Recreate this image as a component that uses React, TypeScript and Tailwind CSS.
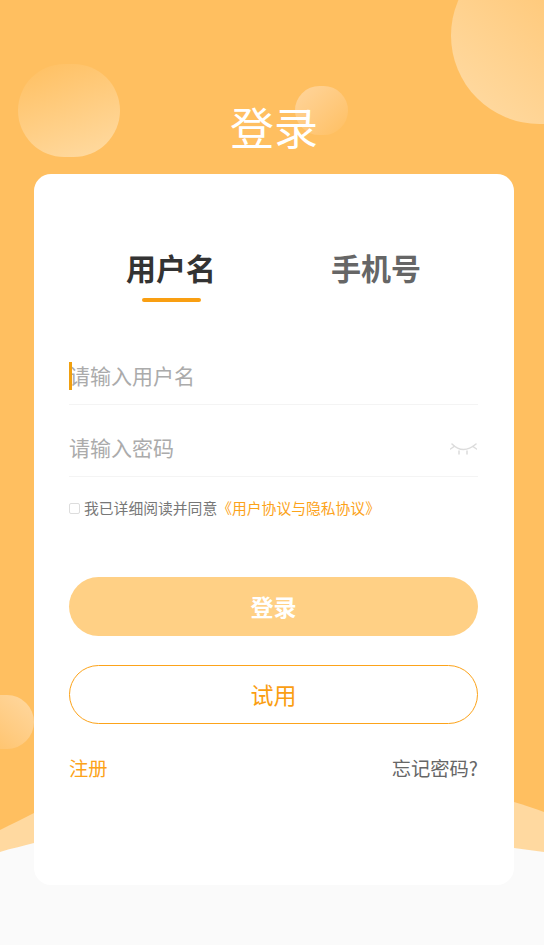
export default function App() {
  const font = { fontFamily: '"Noto Sans CJK SC", sans-serif' };
  return (
    <div style={font} className="relative w-[544px] h-[945px] overflow-hidden bg-[#ffbf60]">
      {/* decorative background */}
      <div className="absolute left-[451px] top-[-53px] w-[177px] h-[177px] rounded-full bg-gradient-to-bl from-[#ffbf60] to-[#ffdca6]" />
      <div className="absolute left-[18px] top-[64px] w-[102px] h-[93px] rounded-full bg-[linear-gradient(160deg,#ffbf60,#ffdba3)]" />
      <div className="absolute left-[295px] top-[86px] w-[53px] h-[49px] rounded-full bg-gradient-to-br from-[#ffd59c] to-[#ffbf60]" />
      <div className="absolute left-[-30px] top-[695px] w-[64px] h-[54px] rounded-full bg-gradient-to-bl from-[#ffd8a0] to-[#ffbf60]" />
      <svg className="absolute left-0 top-[790px]" width="544" height="155" viewBox="0 0 544 155">
        <path d="M0 40 C12 34 24 28 34 23 C70 6 110 0 160 0 L400 0 C440 0 480 4 514 12 C524 15 534 18 544 22 L544 155 L0 155 Z" fill="#ffd9a0" />
        <path d="M0 62 C12 58 24 56 34 53 C110 35 190 32 280 33 C360 35 440 47 514 58 L544 62 L544 155 L0 155 Z" fill="#fafafa" />
      </svg>

      <div className="relative ml-[34px] w-[480px] flex flex-col">
        <h1 className="mt-[93px] h-[81px] text-center text-[44px] leading-[66px] font-normal text-white">登录</h1>

        <div className="h-[711px] rounded-[17px] bg-white pl-[35px] pr-[36px] flex flex-col">
          <div className="mt-[68px] flex px-[57px] justify-between">
            <div className="flex flex-col items-center">
              <span className="text-[30px] leading-[50px] font-semibold text-[#333333]">用户名</span>
              <span className="mt-[6px] w-[59px] h-[4px] rounded-full bg-[#f99f12]" />
            </div>
            <div className="flex flex-col items-center">
              <span className="text-[30px] leading-[50px] font-semibold text-[#666666]">手机号</span>
            </div>
          </div>

          <div className="mt-[45px] h-[58px] border-b border-[#f4f4f4] flex items-center">
            <span className="relative text-[21px] leading-[30px] text-[#ababab] -mt-[1px]">
              <span className="absolute left-0 top-[2px] w-[3px] h-[28px] bg-[#f0a010]" />
              请输入用户名
            </span>
          </div>
          <div className="mt-[14px] h-[58px] border-b border-[#f4f4f4] flex items-center justify-between">
            <span className="text-[21px] leading-[30px] text-[#ababab] -mt-[1px]">请输入密码</span>
            <svg className="mr-[1px]" width="27" height="16" viewBox="0 0 27 16" fill="none" stroke="#dcdcdc" strokeWidth="1.5" strokeLinecap="round">
              <path d="M2 4 Q13 15 26 4" />
              <path d="M0.5 9 L4 6.5 M26.5 9 L23 6.5 M9 11 L9 14 M17 11 L17 14" />
            </svg>
          </div>

          <div className="mt-[20px] flex items-center text-[14.8px] leading-[22px]">
            <span className="w-[11px] h-[11px] rounded-[2px] border border-[#dddddd] mr-[4px]" />
            <span className="text-[#777777]">我已详细阅读并同意</span>
            <span className="text-[#fca31a]">《用户协议与隐私协议》</span>
          </div>

          <button className="mt-[58px] h-[59px] rounded-full bg-[#ffd085] text-white text-[23px] font-bold">登录</button>
          <button className="mt-[29px] h-[59px] rounded-full border border-[#fca31a] text-[#fa9e12] text-[23px]">试用</button>

          <div className="mt-[29px] flex justify-between text-[19.3px] leading-[30px]">
            <span className="text-[#fca31a]">注册</span>
            <span className="text-[#666666]">忘记密码?</span>
          </div>
        </div>
      </div>
    </div>
  );
}
